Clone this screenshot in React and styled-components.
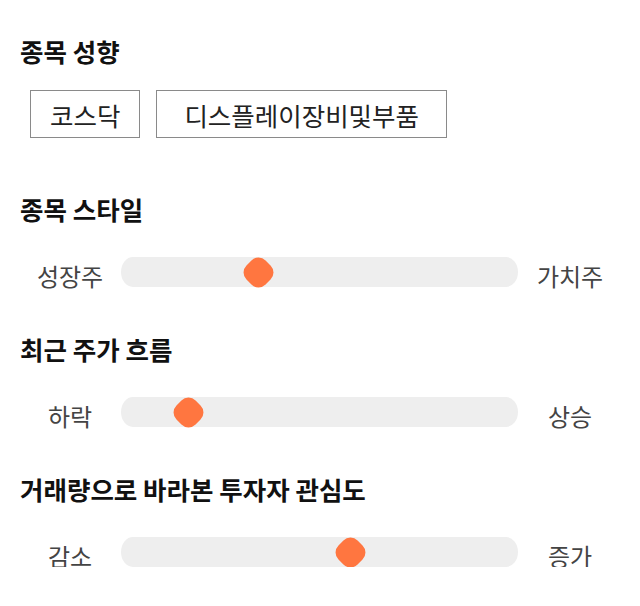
import styled, { createGlobalStyle } from 'styled-components'

const GlobalStyle = createGlobalStyle`
    body{
        margin:0;
        background:#fff;
        font-family:"Noto Sans CJK KR", "Noto Sans", sans-serif;
    }
`

const sliders = [
    { title: '종목 스타일', left: '성장주', right: '가치주', pos: 137 },
    { title: '최근 주가 흐름', left: '하락', right: '상승', pos: 67 },
    { title: '거래량으로 바라본 투자자 관심도', left: '감소', right: '증가', pos: 229 },
]

export default function App(){
    return (
        <Page>
            <GlobalStyle />
            <Section>
                <Heading>종목 성향</Heading>
                <Tags>
                    <Tag>코스닥</Tag>
                    <Tag $wide>디스플레이장비및부품</Tag>
                </Tags>
            </Section>

            {sliders.map((s) => (
                <Section key={s.title}>
                    <Heading>{s.title}</Heading>
                    <SliderRow>
                        <Label>{s.left}</Label>
                        <Track>
                            <Thumb style={{ left: s.pos }} />
                        </Track>
                        <Label>{s.right}</Label>
                    </SliderRow>
                </Section>
            ))}
        </Page>
    )
}

const Page = styled.main`
    width:640px;
    padding:36px 20px 0;
    box-sizing:border-box;
    display:flex;
    flex-direction:column;
    gap:56px;
`

const Section = styled.section`
    display:flex;
    flex-direction:column;
    gap:33px;

    & + & + &{
        margin-top:-9px;
    }
`

const Heading = styled.h2`
    margin:0;
    font-size:25.5px;
    line-height:30px;
    font-weight:700;
    color:#111;
`

const Tags = styled.div`
    display:flex;
    gap:16px;
    padding-left:10px;
    margin-top:-9px;
`

const Tag = styled.div`
    height:48px;
    box-sizing:border-box;
    border:1px solid #8a8a8a;
    padding:0 ${p => p.$wide ? '27px' : '19px'};
    display:flex;
    align-items:center;
    font-size:25.5px;
    color:#222;
`

const SliderRow = styled.div`
    display:grid;
    grid-template-columns:100px 400px 100px;
    align-items:center;
    height:30px;
`

const Label = styled.span`
    text-align:center;
    font-size:24px;
    line-height:30px;
    color:#444;
    transform:translateY(4px);
`

const Track = styled.div`
    position:relative;
    height:30px;
    background:#eeeeee;
    border-radius:12px / 15px;
    margin:0 2px 0 1px;
`

const Thumb = styled.div`
    position:absolute;
    top:50%;
    width:27px;
    height:27px;
    margin:-13.5px 0 0 -13.5px;
    background:#ff7640;
    border-radius:10px;
    transform:rotate(45deg);
`
